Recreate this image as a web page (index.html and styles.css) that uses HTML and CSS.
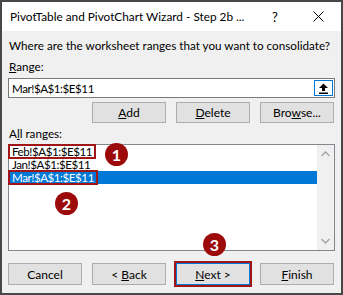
FILE: index.html
```html
<!DOCTYPE html>
<html lang="en">
<head>
    <meta charset="UTF-8">
    <meta name="viewport" content="width=device-width, initial-scale=1.0">
    <title>PivotTable and PivotChart Wizard</title>
    <link rel="stylesheet" href="styles.css">
</head>
<body>
    <div class="window">
        <div class="titlebar">
            <span class="title">PivotTable and PivotChart Wizard - Step 2b ...</span>
            <span class="help">?</span>
            <span class="close">
                <svg width="11" height="11" viewBox="0 0 11 11">
                    <path d="M0.5 0.5 L10.5 10.5 M10.5 0.5 L0.5 10.5" stroke="#000" stroke-width="1" fill="none"/>
                </svg>
            </span>
        </div>
        <div class="content">
            <div class="question">Where are the worksheet ranges that you want to consolidate?</div>
            <div class="label"><u>R</u>ange:</div>
            <div class="range-input">
                <span class="ref">Mar!$A$1:$E$11</span>
                <span class="collapse-btn">
                    <svg width="11" height="11" viewBox="0 0 11 11">
                        <path d="M5.5 0.5 L10 5 L7 5 L7 8 L4 8 L4 5 L1 5 Z" fill="#000"/>
                        <rect x="1" y="9.5" width="9" height="1.5" fill="#000"/>
                    </svg>
                </span>
            </div>
            <div class="btn-row">
                <button class="btn col2"><u>A</u>dd</button>
                <button class="btn"><u>D</u>elete</button>
                <button class="btn">Bro<u>w</u>se...</button>
            </div>
            <div class="label tight">A<u>l</u>l ranges:</div>
            <div class="list">
                <div class="items">
                    <div class="item"><span class="ref marked">Feb!$A$1:$E$11</span></div>
                    <div class="item"><span class="ref">Jan!$A$1:$E$11</span></div>
                    <div class="item selected"><span class="ref marked">Mar!$A$1:$E$11</span></div>
                </div>
                <div class="scrollbar">
                    <svg width="9" height="6" viewBox="0 0 9 6">
                        <path d="M0.5 5 L4.5 1 L8.5 5" stroke="#a3a3a3" stroke-width="1.3" fill="none"/>
                    </svg>
                    <svg width="9" height="6" viewBox="0 0 9 6">
                        <path d="M0.5 1 L4.5 5 L8.5 1" stroke="#a3a3a3" stroke-width="1.3" fill="none"/>
                    </svg>
                </div>
            </div>
            <div class="btn-row bottom">
                <button class="btn">Cancel</button>
                <button class="btn">&lt; <u>B</u>ack</button>
                <button class="btn default"><u>N</u>ext &gt;</button>
                <button class="btn"><u>F</u>inish</button>
            </div>
        </div>

        <span class="badge b1">1</span>
        <span class="badge b2">2</span>
        <span class="badge b3">3</span>
    </div>
</body>
</html>
```

FILE: styles.css
```css
body {
    margin: 0;
    font-family: Lato, "Liberation Sans", sans-serif;
    font-size: 11.7px;
    color: #000;
}

.window {
    position: relative;
    width: 343px;
    height: 295px;
    box-sizing: border-box;
    border: 2px solid #484848;
    background-color: #f0f0f0;
    display: flex;
    flex-direction: column;
    white-space: nowrap;
}

.titlebar {
    height: 29px;
    flex-shrink: 0;
    background-color: #fff;
    display: flex;
    align-items: center;
    padding-left: 8px;
    font-size: 11.8px;
}

.title {
    width: 262px;
}

.help {
    width: 41px;
    font-size: 13px;
}

.close {
    display: flex;
    align-items: center;
}

.content {
    padding: 0 6px;
    display: flex;
    flex-direction: column;
}

.question {
    margin-top: 6px;
    line-height: 16px;
    padding-left: 1px;
}

.label {
    margin-top: 5px;
    line-height: 16px;
    padding-left: 1px;
}

.label.tight {
    margin-top: 2px;
}

.range-input {
    margin-top: 4px;
    height: 20px;
    box-sizing: border-box;
    border: 1px solid #7a7a7a;
    background-color: #fff;
    display: flex;
    align-items: center;
    justify-content: space-between;
    padding: 0 1px 0 3px;
}

.ref {
    font-size: 11.6px;
    letter-spacing: -0.45px;
}

.collapse-btn {
    width: 19px;
    height: 16px;
    box-sizing: border-box;
    border: 1px solid #0078d7;
    display: flex;
    align-items: center;
    justify-content: center;
}

.btn-row {
    margin-top: 4px;
    display: grid;
    grid-template-columns: repeat(4, 74px);
    column-gap: 10px;
}

.btn-row.bottom {
    margin-top: 12px;
}

.btn {
    height: 21px;
    box-sizing: border-box;
    border: 1px solid #adadad;
    background-color: #e1e1e1;
    font-family: inherit;
    font-size: 12px;
    color: #000;
    padding: 0;
}

.btn-row.bottom .btn {
    height: 22px;
}

.btn.col2 {
    grid-column: 2;
}

.btn.default {
    border: 1px solid #0078d7;
    outline: 2px solid #a01515;
}

.list {
    margin-top: 3px;
    height: 107px;
    flex-shrink: 0;
    box-sizing: border-box;
    border: 1px solid #828790;
    background-color: #fff;
    display: flex;
}

.items {
    flex: 1;
}

.item {
    height: 13px;
    line-height: 13px;
    padding-left: 3px;
}

.item.selected {
    background-color: #0078d7;
    color: #fff;
}

.marked {
    display: inline-block;
    vertical-align: top;
    height: 11px;
    line-height: 12px;
    margin: 1px 0 0 -2px;
    padding: 0 2px;
    outline: 2px solid #a01515;
}

.scrollbar {
    width: 17px;
    background-color: #f0f0f0;
    display: flex;
    flex-direction: column;
    justify-content: space-between;
    align-items: center;
    padding: 6px 0;
    box-sizing: border-box;
}

.badge {
    position: absolute;
    width: 23px;
    height: 23px;
    border-radius: 50%;
    background-color: #9c0a0a;
    color: #fff;
    font-weight: bold;
    font-size: 16px;
    line-height: 23px;
    text-align: center;
}

.b1 {
    left: 103px;
    top: 141px;
}

.b2 {
    left: 53px;
    top: 190px;
}

.b3 {
    left: 201px;
    top: 231px;
}
```
